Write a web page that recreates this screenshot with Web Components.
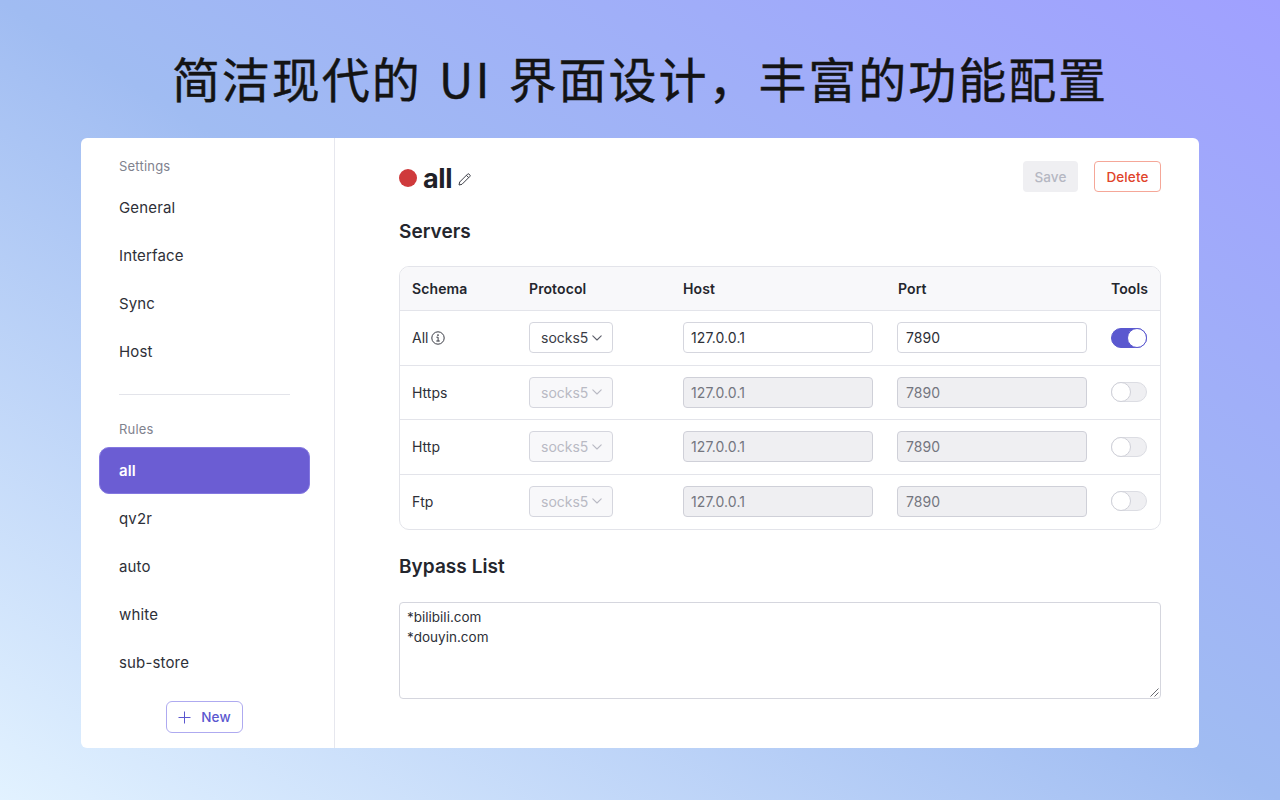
<!DOCTYPE html>
<html lang="zh"><head><meta charset="utf-8"><title>Settings</title>
<style>
html,body{margin:0;height:100%}
body{width:1280px;height:800px;overflow:hidden;font-family:Inter,"Noto Sans CJK SC",sans-serif;background:linear-gradient(to top right,#e2f2ff 0%,#a0bcf2 50%,#a0a0ff 100%)}
</style></head><body>
<x-page></x-page>
<script>
function def(name,css,html,extra){
  class C extends HTMLElement{
    constructor(){super();const r=this.attachShadow({mode:'open'});
      const h=typeof html==='function'?html(this):html;
      r.innerHTML='<style>'+css+'</style>'+h;}
    connectedCallback(){if(extra)extra(this)}
  }
  customElements.define(name,C);
}
const chev='<svg width="10" height="6" viewBox="0 0 10 6" fill="none" stroke="currentColor" stroke-width="1.1" stroke-linecap="round" stroke-linejoin="round"><path d="M.8 .8 5 5 9.2 .8"/></svg>';
def('x-nav-item',`:host{display:flex;align-items:center;height:48px;padding:0 20px;font-size:15px;letter-spacing:.15px;color:#2e3038;box-sizing:border-box;border-radius:10px;margin:0}
:host([active]){height:47px;background:#6b5dd3;color:#fff;font-weight:600;border:1px solid #8478e0;padding:0 19px}`,'<slot></slot>');
def('x-nav-label',`:host{display:flex;align-items:center;font-size:13px;letter-spacing:.2px;color:#7f828e;padding:0 20px;height:18px}`,'<slot></slot>');
def('x-btn',`:host{display:inline-flex;align-items:center;justify-content:center;gap:10px;height:31px;box-sizing:border-box;border-radius:4px;font-size:13.5px;font-weight:500;letter-spacing:.1px}
:host([kind=save]){width:55px;background:#efeff2;color:#b5b7c2}
:host([kind=delete]){width:67px;background:#fff;color:#e0432a;border:1px solid #f5a798}
:host([kind=new]){width:77px;height:32px;background:#fff;color:#5b57cf;border:1px solid #aeaaf0;border-radius:6px}`,'<slot></slot>');
def('x-select',`:host{display:flex;align-items:center;gap:4px;width:84px;height:31px;box-sizing:border-box;padding:0 11px;font-size:14px;color:#3a3c45;background:#fff;border:1px solid #d5d6de;border-radius:4px}
:host([disabled]){color:#b9bac4;background:#f8f8fa}
svg{color:#5e606b;flex:none}:host([disabled]) svg{color:#b9bac4}`,'<slot></slot>'+chev);
def('x-field',`:host{display:flex;align-items:center;width:190px;height:31px;box-sizing:border-box;padding:0 7px;font-size:14px;letter-spacing:.1px;color:#2e3038;background:#fff;border:1px solid #d5d6de;border-radius:4px}
:host([port]){padding-left:8px}
:host([disabled]){color:#74767f;background:#efeff2;border-color:#cfd0d8}`,'<slot></slot>');
def('x-toggle',`:host{display:block;width:36px;height:20px;box-sizing:border-box;border-radius:10px;background:#efeff2;border:1px solid #dcdde3;position:relative}
:host([on]){background:#5a58cf;border-color:#5a58cf}
i{position:absolute;left:-1px;top:-1px;width:20px;height:20px;box-sizing:border-box;border-radius:50%;background:#fff;border:1px solid #cfd0d8}
:host([on]) i{left:auto;right:-1px;border-color:#5a58cf}`,'<i></i>');
const rowCss=`:host{display:grid;grid-template-columns:117px 154px 214px 190px 1fr;align-items:center;height:54.5px;padding:0 12px;box-sizing:border-box;border-top:1px solid #e3e4ea;font-size:14px;color:#2e3038}
x-toggle{justify-self:end;margin-right:1px}
.s{display:flex;align-items:center;gap:3px}
svg{display:block}`;
const info='<svg width="14" height="14" viewBox="0 0 14 14" fill="none" stroke="#3a3c45" stroke-width="1"><circle cx="7" cy="7" r="6.2"/><path d="M5.8 6.2H7.1V10M5.7 10H8.4" stroke-linecap="round"/><circle cx="7" cy="4.1" r=".45" fill="#3a3c45"/></svg>';
def('x-server-row',rowCss,el=>{
  const on=el.hasAttribute('on'),d=on?'':' disabled';
  return `<div class="s"><span>${el.getAttribute('schema')}</span>${on?info:''}</div>
  <x-select${d}>socks5</x-select><x-field${d}>127.0.0.1</x-field><x-field port${d}>7890</x-field><x-toggle${on?' on':''}></x-toggle>`;
});
def('x-server-head',`:host{display:grid;grid-template-columns:117px 154px 215px 189px 1fr;align-items:center;height:43px;padding:0 12px;background:#f8f8fa;font-size:14px;font-weight:600;color:#24262d;letter-spacing:.1px}
span:last-child{justify-self:end}`,'<span>Schema</span><span>Protocol</span><span>Host</span><span>Port</span><span>Tools</span>');
def('x-server-table',`:host{display:block;border:1px solid #e3e4ea;border-radius:10px;overflow:hidden;height:264px;box-sizing:border-box;margin-top:22px}`,
`<x-server-head></x-server-head><x-server-row schema="All" on></x-server-row><x-server-row schema="Https"></x-server-row><x-server-row schema="Http"></x-server-row><x-server-row schema="Ftp"></x-server-row>`);
def('x-bypass',`:host{display:block;position:relative;height:97px;box-sizing:border-box;margin-top:23px;padding:4px 7px;border:1px solid #d5d6de;border-radius:4px;font-size:13.5px;line-height:20px;color:#2e3038;white-space:pre-line}
svg{position:absolute;right:1px;bottom:1px}`,
`<slot></slot><svg width="10" height="10" viewBox="0 0 10 10" stroke="#6a6b72" stroke-width="1" fill="none"><path d="M1.5 9.5 9.5 1.5M5.5 9.5 9.5 5.5"/></svg>`);
def('x-sidebar',`:host{display:flex;flex-direction:column;width:254px;flex:none;box-sizing:border-box;border-right:1px solid #e6e7ee;padding:19px 24px 0 18px}
hr{border:0;height:1px;background:#e3e4ea;margin:19px 20px 25px;width:171px;flex:none}
x-nav-label{margin-bottom:8px}
x-nav-label.r{margin-bottom:9px}
.list{display:flex;flex-direction:column}
.foot{display:flex;justify-content:center;margin-top:15px}
x-btn svg{display:block}`,
`<x-nav-label>Settings</x-nav-label><div class="list"><x-nav-item>General</x-nav-item><x-nav-item>Interface</x-nav-item><x-nav-item>Sync</x-nav-item><x-nav-item>Host</x-nav-item></div>
<hr><x-nav-label class="r">Rules</x-nav-label><div class="list"><x-nav-item active>all</x-nav-item><x-nav-item>qv2r</x-nav-item><x-nav-item>auto</x-nav-item><x-nav-item>white</x-nav-item><x-nav-item>sub-store</x-nav-item></div>
<div class="foot"><x-btn kind="new"><svg width="13" height="13" viewBox="0 0 13 13" stroke="#5b57cf" stroke-width="1" fill="none"><path d="M6.5 .5V12.5M.5 6.5H12.5"/></svg>New</x-btn></div>`);
def('x-rule-head',`:host{display:flex;align-items:center;height:31px}
.dot{width:18px;height:18px;border-radius:50%;background:#cf3a3c;margin:2px 6px 0 0;flex:none}
h1{margin:3px 0 0;font-size:27px;font-weight:700;color:#1f2128;letter-spacing:-.4px;line-height:31px}
svg{margin:5px 0 0 6px}
.sp{flex:1}
x-btn[kind=delete]{margin-left:16px}`,
`<span class="dot"></span><h1>all</h1><svg width="13" height="13" viewBox="0 0 13 13" fill="none" stroke="#3a3c45" stroke-width="1" stroke-linejoin="round"><path d="M1 12 1.7 9 9.6 1.1a1 1 0 0 1 1.4 0l.9.9a1 1 0 0 1 0 1.4L4 11.3ZM8.4 2.3l2.3 2.3"/></svg><span class="sp"></span><x-btn kind="save">Save</x-btn><x-btn kind="delete">Delete</x-btn>`);
def('x-section-title',`:host{display:block;font-size:19px;font-weight:600;letter-spacing:.05px;color:#24262d;line-height:24px}`,'<slot></slot>');
def('x-main',`:host{display:block;flex:1;padding:23px 38px 0 64px;min-width:0}
x-section-title.a{margin-top:28px}
x-section-title.b{margin-top:25px}`,
`<x-rule-head></x-rule-head><x-section-title class="a">Servers</x-section-title><x-server-table></x-server-table><x-section-title class="b">Bypass List</x-section-title><x-bypass>*bilibili.com
*douyin.com</x-bypass>`);
def('x-card',`:host{display:flex;width:1118px;height:610px;background:#fff;border-radius:6px;overflow:hidden}`,'<x-sidebar></x-sidebar><x-main></x-main>');
def('x-page',`:host{display:flex;flex-direction:column;align-items:center;width:1280px;height:800px}
h1{margin:0;height:138px;box-sizing:border-box;padding-top:16px;display:flex;align-items:center;justify-content:center;font:400 48px/1 "Noto Sans CJK SC",sans-serif;-webkit-text-stroke:.4px #141414;color:#141414;letter-spacing:1.95px;word-spacing:4.5px;white-space:pre}`,
`<h1>简洁现代的 UI 界面设计，丰富的功能配置</h1><x-card></x-card>`);
</script>
</body></html>
